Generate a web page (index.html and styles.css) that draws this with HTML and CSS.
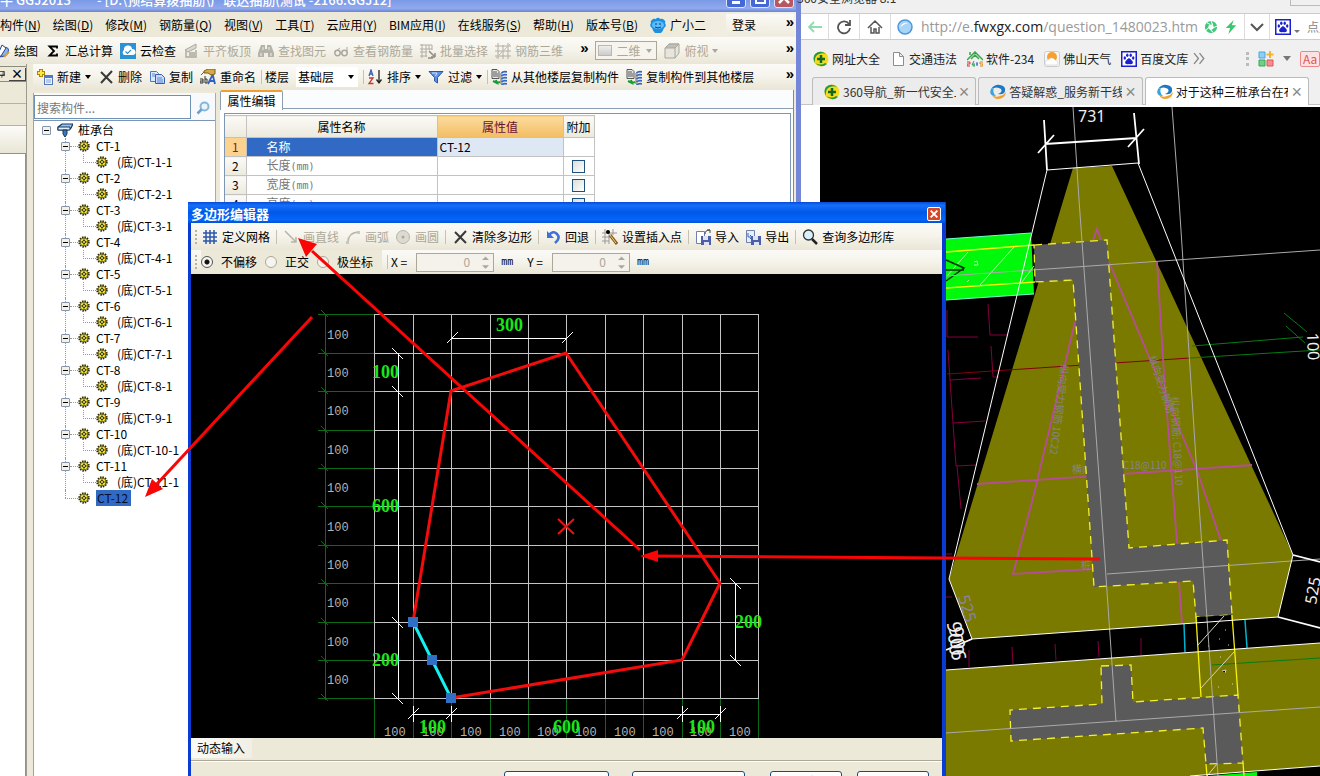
FILE: index.html
```html
<!DOCTYPE html>
<html lang="zh-CN">
<head>
<meta charset="utf-8">
<title>多边形编辑器</title>
<link rel="stylesheet" href="styles.css">
</head>
<body>
<svg class="defs" aria-hidden="true">
  <defs>
    <symbol id="i-pen" viewBox="0 0 16 16"><ellipse cx="9" cy="9" rx="6" ry="4" fill="#8fb4ee" stroke="#2b4fa8" transform="rotate(-35 9 9)"/><path d="M8 2l4 3-5 8-3 1 0-3z" fill="#fff" stroke="#24408c"/><path d="M10 14l5-5" stroke="#d8a030" stroke-width="2"/></symbol>
    <symbol id="i-sigma" viewBox="0 0 16 16"><path d="M12 5.500V3.500H4.500L9 8L4.500 12.500H12V10.500" fill="none" stroke="#000" stroke-width="1.800"/></symbol>
    <symbol id="i-cloud" viewBox="0 0 16 16"><rect width="16" height="16" fill="#2a93d5"/><path d="M4 12a3 3 0 0 1 0-5 4 4 0 0 1 8-1 3 3 0 0 1 1 6z" fill="#fff"/><path d="M5.500 8.500l2 2 3.500-3.500" fill="none" stroke="#2a93d5" stroke-width="1.200"/></symbol>
    <symbol id="i-slab" viewBox="0 0 16 16"><path d="M2 7l11-6v4l-8 4z" fill="#dcdad0" stroke="#aaa89e"/><path d="M3 8v6h10V7M6 10h6M6 12h6" fill="none" stroke="#aaa89e" stroke-width="1.400"/></symbol>
    <symbol id="i-binoc" viewBox="0 0 16 16"><path d="M3 2h4v4h2V2h4l3 8v4h-6v-4H6v4H0v-4z" fill="#b5b3a9"/><path d="M3 10v3M13 10v3M5 4v3M11 4v3" stroke="#eee"/></symbol>
    <symbol id="i-glasses" viewBox="0 0 16 16"><circle cx="4.500" cy="10" r="2.700" fill="none" stroke="#aaa89e" stroke-width="1.500"/><circle cx="11.500" cy="10" r="2.700" fill="none" stroke="#aaa89e" stroke-width="1.500"/><path d="M7 10h2M3 8l4-3M14 9V4" stroke="#aaa89e"/></symbol>
    <symbol id="i-batch" viewBox="0 0 16 16"><path d="M0 2h12M0 6h12M0 9h7M0 13h7M2 1v14M6 2v12M9 2v5M12 2v5" stroke="#b0aea4"/><path d="M9 8l5 5M15 14v-4M15 14h-4M8 15h5" stroke="#8f8d85" stroke-width="1.500"/></symbol>
    <symbol id="i-bars" viewBox="0 0 16 16"><path d="M0 3h16M0 8h16M0 13h16M3 0v16M8 2v14M13 0v16" stroke="#b0aea4"/><path d="M1 15L15 1" stroke="#c0beb5"/></symbol>
    <symbol id="i-cube" viewBox="0 0 16 16"><path d="M1 5l4-4h10v9l-4 5H1z" fill="#e7e5dc" stroke="#a8a69c"/><path d="M1 5l4-4h10l-4 4z" fill="#c2c0b6" stroke="#a8a69c"/><path d="M11 5v10" stroke="#a8a69c"/></symbol>
    <symbol id="i-new" viewBox="0 0 16 16"><path d="M4 0v8M0 4h8" stroke="#a98a00" stroke-width="4"/><path d="M4 1v6M1 4h6" stroke="#ffe34a" stroke-width="2"/><rect x="7.500" y="6.500" width="8" height="9" fill="#e9f2ff" stroke="#5577b8"/><path d="M8 8h7" stroke="#4d7bd0" stroke-width="2"/><path d="M9 11h5M9 13h5" stroke="#7fa2dd"/></symbol>
    <symbol id="i-x" viewBox="0 0 16 16"><path d="M3 3l11 11M14 2L3 14" stroke="#3a3a3a" stroke-width="2"/></symbol>
    <symbol id="i-copy" viewBox="0 0 16 16"><path d="M1.500 2.500h6l2 2v8h-8z" fill="#dce9ff" stroke="#4d78c4"/><path d="M6.500 5.500h6l3 3v6h-9z" fill="#c8dcff" stroke="#345fb0"/><path d="M8 9h5M8 11h6M8 13h6M3 5h3M3 7h3" stroke="#5c86d2"/></symbol>
    <symbol id="i-rename" viewBox="0 0 16 16"><path d="M4 2l4-2h7v5l-4 1-3-2H4z" fill="#d5a945" stroke="#7b5c1c"/><path d="M1 6l3-3" stroke="#7b5c1c"/><path d="M8 15l4-8h1l2 8M10 12h5" fill="none" stroke="#2f61c4" stroke-width="1.800"/><path d="M0 10h3v4H0v-2h3M5 7v7h2v-4H5" fill="none" stroke="#333"/></symbol>
    <symbol id="i-sort" viewBox="0 0 16 16"><path d="M2 7l2-6 2 6M2.500 5h3" fill="none" stroke="#3b62b8" stroke-width="1.300"/><path d="M2 9h4L2 14.500h4.500" fill="none" stroke="#c03a3a" stroke-width="1.300"/><path d="M12 1v12M9.500 10.500L12 14l2.500-3.500" fill="none" stroke="#222" stroke-width="1.300"/></symbol>
    <symbol id="i-funnel" viewBox="0 0 16 16"><path d="M1 2.500h14L9.500 8.500V14l-3-2V8.500z" fill="#5d8fe6" stroke="#2c55a5"/><path d="M4 4h5L7.500 7" fill="none" stroke="#cfe2ff"/></symbol>
    <symbol id="i-floor" viewBox="0 0 16 16"><path d="M1 .5h5l2 2v7H1z" fill="#e9e9e9" stroke="#555"/><path d="M2 3h4M2 5h5M2 7h5" stroke="#555"/><path d="M2 12l4 2-1-3M6 14l3-1" stroke="#1b9b34" stroke-width="2" fill="none"/><path d="M10.500 4q2-2 5.500-1M10.500 7q2-2 5.500-1M10.500 10q2-2 5.500-1M10.500 13q2-2 5.500-1M10.500 16q2-2 5.500-1" stroke="#3566c0" stroke-width="1.800" fill="none"/><path d="M10 4v11" stroke="#666"/></symbol>
    <symbol id="i-mascot" viewBox="0 0 16 16"><path d="M8 1q1-1 2 1 3-1 4 1 2 1 1 3 2 3-1 5-1 3-3 5H5q-2-2-3-5-3-2-1-5-1-2 1-3 1-2 4-1 1-2 2-1z" fill="#1d8fe0"/><ellipse cx="8" cy="8" rx="6" ry="4" fill="#5bbcfb"/><path d="M6 6v2M10 6v2M5 10q3 2 6 0" stroke="#0b3c78" fill="none"/></symbol>
    <symbol id="i-gear" viewBox="0 0 12 12"><circle cx="6" cy="6" r="4.800" fill="none" stroke="#2d2a00" stroke-width="1.800" stroke-dasharray="1.500 1"/><circle cx="6" cy="6" r="4" fill="#f1e63a" stroke="#2d2a00" stroke-width=".6"/><path d="M6 2v8M2 6h8" stroke="#2d2a00" stroke-width=".7"/><circle cx="6" cy="6" r="1.500" fill="#fff79a" stroke="#2d2a00"/></symbol>
    <symbol id="i-cap" viewBox="0 0 16 16"><path d="M1 5l4-3h11l-2 4-3 2H1z" fill="#9cc4ea" stroke="#12365f" stroke-width="1.200"/><path d="M1 5h12v3H1z" fill="#e4f1fc" stroke="#12365f"/><path d="M6 8h4v4l-2 3-2-3z" fill="#3f78b5" stroke="#12365f"/></symbol>
    <symbol id="i-find" viewBox="0 0 16 16"><circle cx="9.500" cy="6.500" r="4" fill="#e8f5ff" stroke="#86b6dc" stroke-width="2"/><path d="M6.500 9.500L2.500 13.500" stroke="#6aa0cf" stroke-width="2.500"/></symbol>
    <symbol id="i-grid" viewBox="0 0 16 16"><path d="M1 4h14M1 8h14M1 12h14M4 1v14M8 1v14M12 1v14" stroke="#2b57ad" stroke-width="1.500"/></symbol>
    <symbol id="i-line" viewBox="0 0 16 16"><path d="M2 2l11 11M13 8v5H8" fill="none" stroke="#b7b5aa" stroke-width="1.500"/></symbol>
    <symbol id="i-arc" viewBox="0 0 16 16"><path d="M3 13Q3 4 13 3" fill="none" stroke="#b7b5aa" stroke-width="1.500"/><path d="M1 12h3v3H1zM12 2h3v3h-3z" fill="#c9c7bc"/></symbol>
    <symbol id="i-circ" viewBox="0 0 16 16"><circle cx="8" cy="8" r="6.500" fill="#dddbd1" stroke="#b7b5aa"/><circle cx="8" cy="8" r="1.500" fill="#aaa89e"/></symbol>
    <symbol id="i-undo" viewBox="0 0 16 16"><path d="M4 6q4-5 8-1t-2 9" fill="none" stroke="#3f72d4" stroke-width="2.600"/><path d="M2 2v7h7z" fill="#3f72d4"/></symbol>
    <symbol id="i-insert" viewBox="0 0 16 16"><path d="M0 4h15M0 8h9M0 12h7M3 0v15M7 4v11M11 0v6" stroke="#999"/><circle cx="6" cy="3" r="2" fill="#000"/><path d="M8 6l7 9" stroke="#8a5a1a" stroke-width="3"/><path d="M8 6l6 8" stroke="#f0d080"/></symbol>
    <symbol id="i-import" viewBox="0 0 16 16"><path d="M1.500 2.500h8v12h-8z" fill="#fff" stroke="#6f7fb0"/><rect x="6" y="7" width="10" height="9" fill="#4d5fa8"/><path d="M8 7h5v4H8zM9 13h5v3H9z" fill="#dfe4f5"/><path d="M10 5q0-4 5-4M12 1h3v3" fill="none" stroke="#444"/></symbol>
    <symbol id="i-export" viewBox="0 0 16 16"><path d="M1.500 1.500h8v12h-8z" fill="#e7eefc" stroke="#6f7fb0"/><rect x="6" y="7" width="10" height="9" fill="#4d5fa8"/><path d="M8 7h5v4H8zM9 13h5v3H9z" fill="#dfe4f5"/><path d="M3 4v4h4M5 6l2 2-2 2" fill="none" stroke="#3b66c0"/></symbol>
    <symbol id="i-mag" viewBox="0 0 16 16"><circle cx="6.500" cy="6" r="5" fill="#d8f0fb" stroke="#333" stroke-width="1.300"/><path d="M10 10l5 5" stroke="#222" stroke-width="2.500"/></symbol>
    <symbol id="i-360" viewBox="0 0 16 16"><circle cx="8" cy="8" r="7.500" fill="#f2dc1d"/><path d="M2 3Q8-2 14 4Q11 1 6 3T2 12Q-1 7 2 3z" fill="#239b3c"/><path d="M14 13Q8 18 2 12Q8 15 12 12z" fill="#239b3c"/><path d="M8 4v8M4 8h8" stroke="#13661f" stroke-width="2.500"/></symbol>
    <symbol id="i-page" viewBox="0 0 16 16"><path d="M3.500 1.500h6l4 4v9h-10z M9.500 1.500v4h4" fill="#fff" stroke="#8d8d8d"/></symbol>
    <symbol id="i-house" viewBox="0 0 16 16"><path d="M0 9l8-8 8 8M4 8l4-4 4 4M3 4V1" fill="none" stroke="#3aa34b" stroke-width="1.500"/><path d="M0 11h3v2H0v2h3" fill="none" stroke="#d33"/><path d="M7 10l-2 4h3M7 12v4" fill="none" stroke="#2aa050"/><path d="M10 11v4M9 13h2" stroke="#2a66d0"/><path d="M16 11h-3v2h3v2h-3" fill="none" stroke="#e08a1c"/></symbol>
    <symbol id="i-sun" viewBox="0 0 16 16"><rect x=".5" y=".5" width="15" height="15" rx="2" fill="#f6f6f6" stroke="#ccc"/><circle cx="8" cy="6" r="5" fill="#f5a031"/><path d="M2 14a3 3 0 0 1 2-5 4 4 0 0 1 7 0 3 3 0 0 1 2 5z" fill="#fff" stroke="#ccc" stroke-width=".6"/></symbol>
    <symbol id="i-paw" viewBox="0 0 16 16"><rect x=".75" y=".75" width="14.500" height="14.500" fill="#fff" stroke="#1a20cf" stroke-width="1.500"/><path d="M8 7q2 1 4 4 0 3-4 2-4 1-4-2 2-3 4-4z" fill="#1a20cf"/><ellipse cx="3.800" cy="7" rx="1.200" ry="1.700" fill="#1a20cf"/><ellipse cx="6.300" cy="4.200" rx="1.200" ry="1.800" fill="#1a20cf"/><ellipse cx="9.700" cy="4.200" rx="1.200" ry="1.800" fill="#1a20cf"/><ellipse cx="12.200" cy="7" rx="1.200" ry="1.700" fill="#1a20cf"/></symbol>
    <symbol id="i-swirl" viewBox="0 0 16 16"><path d="M1 5Q5 0 10 1Q16 2 15 7Q14 11 8 10Q13 8 11 5Q7 2 1 5z" fill="#1f78c4"/><path d="M2 11Q6 14 10 12Q14 11 16 8Q15 15 8 15Q4 15 2 11z" fill="#f0a030"/><path d="M1 5Q-2 12 6 12Q2 9 4 4z" fill="#39a3e0"/></symbol>
    <symbol id="i-apps" viewBox="0 0 16 16"><path d="M1 1h6v6H1z" fill="#8ed0f4" stroke="#4aa6dc"/><path d="M1 9h6v6H1z" fill="#6fd088" stroke="#37a955"/><path d="M9 9h6v6H9z" fill="#f58f8f" stroke="#dd5454"/><path d="M12 0v7M8.500 3.500h7" stroke="#f2b52b" stroke-width="2"/></symbol>
  </defs>
</svg>

<div class="desktop">
  <main class="app">
    <header class="app-title"><span>牛 GGJ2013</span><span class="path">- [D:\预结算拨抽筋\广联达抽筋(测试 -2166.GGJ12]</span>
      <span class="win-btns"><button aria-label="最小化"><i class="mini"></i></button><button aria-label="最大化"><i class="maxi"></i></button><button class="red" aria-label="关闭"><svg viewBox="0 0 12 12"><path d="M1 1l10 10M11 1L1 11" stroke="#fff" stroke-width="2.500"/></svg></button></span></header>
    <nav class="menubar">
      <button>构件(<u>N</u>)</button><button>绘图(<u>D</u>)</button><button>修改(<u>M</u>)</button><button>钢筋量(<u>Q</u>)</button><button>视图(<u>V</u>)</button><button>工具(<u>T</u>)</button><button>云应用(<u>Y</u>)</button><button>BIM应用(<u>I</u>)</button><button>在线服务(<u>S</u>)</button><button>帮助(<u>H</u>)</button><button>版本号(<u>B</u>)</button><button class="tool"><svg><use href="#i-mascot"/></svg>广小二</button>
      <div class="login"><button>登录</button><span class="more">»</span></div>
    </nav>
    <div class="toolbar top">
      <button class="tool"><svg><use href="#i-pen"/></svg>绘图</button>
      <button class="tool"><svg><use href="#i-sigma"/></svg>汇总计算</button>
      <button class="tool"><svg><use href="#i-cloud"/></svg>云检查</button>
      <button class="tool" disabled><svg><use href="#i-slab"/></svg>平齐板顶</button>
      <button class="tool" disabled><svg><use href="#i-binoc"/></svg>查找图元</button>
      <button class="tool" disabled><svg><use href="#i-glasses"/></svg>查看钢筋量</button>
      <button class="tool" disabled><svg><use href="#i-batch"/></svg>批量选择</button>
      <button class="tool" disabled><svg><use href="#i-bars"/></svg>钢筋三维</button>
      <span class="more gap">»</span>
      <span class="combo grey"><i class="swatch"></i><select aria-label="视图模式" disabled><option>二维</option></select></span>
      <button class="tool drop" disabled><svg><use href="#i-cube"/></svg>俯视</button>
      <span class="more end">»</span>
    </div>
    <div class="work">
      <aside class="dock">
        <div class="dock-head"><svg class="pin" viewBox="0 0 8 12"><path d="M0 2h7v6H0M5 2v6M0 8h8M3 8v4" fill="none" stroke="#000"/></svg><button aria-label="关闭面板">×</button></div>
        <div class="dock-row"></div><div class="dock-row"></div><div class="dock-row light"></div><div class="dock-body"></div>
      </aside>
      <section class="content">
        <div class="toolbar sub">
          <button class="tool drop"><svg><use href="#i-new"/></svg>新建</button>
          <button class="tool"><svg><use href="#i-x"/></svg>删除</button>
          <button class="tool"><svg><use href="#i-copy"/></svg>复制</button>
          <button class="tool"><svg><use href="#i-rename"/></svg>重命名</button>
          <i class="sep"></i>
          <label for="floor">楼层</label>
          <span class="combo"><select id="floor"><option>基础层</option></select></span>
          <i class="sep"></i>
          <button class="tool drop"><svg><use href="#i-sort"/></svg>排序</button>
          <button class="tool drop"><svg><use href="#i-funnel"/></svg>过滤</button>
          <i class="sep"></i>
          <button class="tool"><svg><use href="#i-floor"/></svg>从其他楼层复制构件</button>
          <button class="tool"><svg><use href="#i-floor"/></svg>复制构件到其他楼层</button>
          <span class="more end">»</span>
        </div>
        <div class="panes">
          <section class="tree-pane">
            <div class="search"><input type="text" placeholder="搜索构件..." aria-label="搜索构件"><button aria-label="搜索"><svg><use href="#i-find"/></svg></button></div>
            <div class="tree">
              <div class="row root"><i class="exp"></i><svg class="cap"><use href="#i-cap"/></svg><span class="name">桩承台</span></div>
              <ul>
                <li><div class="row"><i class="exp"></i><i class="dash"></i><svg><use href="#i-gear"/></svg><span>CT-1</span></div><div class="row leaf"><i class="elbow"></i><svg><use href="#i-gear"/></svg><span>(底)CT-1-1</span></div></li>
                <li><div class="row"><i class="exp"></i><i class="dash"></i><svg><use href="#i-gear"/></svg><span>CT-2</span></div><div class="row leaf"><i class="elbow"></i><svg><use href="#i-gear"/></svg><span>(底)CT-2-1</span></div></li>
                <li><div class="row"><i class="exp"></i><i class="dash"></i><svg><use href="#i-gear"/></svg><span>CT-3</span></div><div class="row leaf"><i class="elbow"></i><svg><use href="#i-gear"/></svg><span>(底)CT-3-1</span></div></li>
                <li><div class="row"><i class="exp"></i><i class="dash"></i><svg><use href="#i-gear"/></svg><span>CT-4</span></div><div class="row leaf"><i class="elbow"></i><svg><use href="#i-gear"/></svg><span>(底)CT-4-1</span></div></li>
                <li><div class="row"><i class="exp"></i><i class="dash"></i><svg><use href="#i-gear"/></svg><span>CT-5</span></div><div class="row leaf"><i class="elbow"></i><svg><use href="#i-gear"/></svg><span>(底)CT-5-1</span></div></li>
                <li><div class="row"><i class="exp"></i><i class="dash"></i><svg><use href="#i-gear"/></svg><span>CT-6</span></div><div class="row leaf"><i class="elbow"></i><svg><use href="#i-gear"/></svg><span>(底)CT-6-1</span></div></li>
                <li><div class="row"><i class="exp"></i><i class="dash"></i><svg><use href="#i-gear"/></svg><span>CT-7</span></div><div class="row leaf"><i class="elbow"></i><svg><use href="#i-gear"/></svg><span>(底)CT-7-1</span></div></li>
                <li><div class="row"><i class="exp"></i><i class="dash"></i><svg><use href="#i-gear"/></svg><span>CT-8</span></div><div class="row leaf"><i class="elbow"></i><svg><use href="#i-gear"/></svg><span>(底)CT-8-1</span></div></li>
                <li><div class="row"><i class="exp"></i><i class="dash"></i><svg><use href="#i-gear"/></svg><span>CT-9</span></div><div class="row leaf"><i class="elbow"></i><svg><use href="#i-gear"/></svg><span>(底)CT-9-1</span></div></li>
                <li><div class="row"><i class="exp"></i><i class="dash"></i><svg><use href="#i-gear"/></svg><span>CT-10</span></div><div class="row leaf"><i class="elbow"></i><svg><use href="#i-gear"/></svg><span>(底)CT-10-1</span></div></li>
                <li><div class="row"><i class="exp"></i><i class="dash"></i><svg><use href="#i-gear"/></svg><span>CT-11</span></div><div class="row leaf"><i class="elbow"></i><svg><use href="#i-gear"/></svg><span>(底)CT-11-1</span></div></li>
                <li class="last"><div class="row"><i class="dash long"></i><svg><use href="#i-gear"/></svg><span class="selected">CT-12</span></div></li>
              </ul>
            </div>
          </section>
          <section class="prop-pane">
            <div class="tabs"><button class="tab">属性编辑</button></div>
            <div class="grid-box">
              <table class="props">
                <colgroup><col class="c-num"><col class="c-name"><col class="c-val"><col class="c-add"></colgroup>
                <thead><tr><th></th><th>属性名称</th><th class="hot">属性值</th><th>附加</th></tr></thead>
                <tbody>
                  <tr class="sel"><th>1</th><td>名称</td><td>CT-12</td><td></td></tr>
                  <tr><th>2</th><td>长度<span class="mm">(mm)</span></td><td></td><td class="c"><input type="checkbox" aria-label="长度附加"></td></tr>
                  <tr><th>3</th><td>宽度<span class="mm">(mm)</span></td><td></td><td class="c"><input type="checkbox" aria-label="宽度附加"></td></tr>
                  <tr><th>4</th><td>高度<span class="mm">(mm)</span></td><td></td><td class="c"><input type="checkbox" aria-label="高度附加"></td></tr>
                </tbody>
              </table>
            </div>
          </section>
        </div>
      </section>
    </div>
  </main>

  <section class="browser">
    <header class="b-title"><span>360安全浏览器 8.1</span><i class="b-ctl"></i></header>
    <div class="address">
      <button aria-label="后退"><svg viewBox="0 0 16 16"><path d="M15 8H2M7 3L2 8l5 5" fill="none" stroke="#8fdcae" stroke-width="1.800"/></svg></button>
      <button aria-label="刷新"><svg viewBox="0 0 16 16"><path d="M13 5A6 6 0 1 0 14 9M14 1v5H9" fill="none" stroke="#555" stroke-width="1.800"/></svg></button>
      <button aria-label="主页"><svg viewBox="0 0 16 16"><path d="M1 9l7-7 7 7M4 8v6h3v-4h2v4h3V8" fill="none" stroke="#555" stroke-width="1.500"/></svg></button>
      <svg class="globe" viewBox="0 0 16 16"><circle cx="8" cy="8" r="7" fill="#a8d4f7" stroke="#4e96df" stroke-width="1.500"/><path d="M3 9Q5 3 11 4Q6 5 3 9z" fill="#fff"/></svg>
      <div class="url">http://e.<b>fwxgx.com</b>/question_1480023.htm</div>
      <svg class="ico" viewBox="0 0 16 16"><circle cx="8" cy="8" r="5" fill="none" stroke="#3fc878" stroke-width="4"/><path d="M8 1l2 5M15 7l-5 2M10 14l-3-4M2 12l4-4M3 3l4 2" stroke="#fff" stroke-width="1.200"/></svg>
      <svg class="ico" viewBox="0 0 16 16"><path d="M11 0L2 9h5l-2 7 9-10H9z" fill="#36c86c"/></svg>
      <button class="b-left" aria-label="展开"><svg viewBox="0 0 16 16"><path d="M2 5l6 6 6-6" fill="none" stroke="#555" stroke-width="2"/></svg></button>
      <div class="searchbox"><svg><use href="#i-paw"/></svg><i class="tri"></i><span>点此搜索</span></div>
    </div>
    <nav class="bookmarks">
      <a href="#"><svg><use href="#i-360"/></svg>网址大全</a><a href="#"><svg><use href="#i-page"/></svg>交通违法</a><a href="#"><svg><use href="#i-house"/></svg>软件-234</a><a href="#"><svg><use href="#i-sun"/></svg>佛山天气</a><a href="#"><svg><use href="#i-paw"/></svg>百度文库</a>
      <svg class="chev" viewBox="0 0 12 12"><path d="M1 1l4 5-4 5M6 1l4 5-4 5" fill="none" stroke="#888" stroke-width="1.200"/></svg>
      <span class="b-tools"><i class="dots"></i><svg><use href="#i-apps"/></svg><i class="tri"></i><span class="aa">Aa</span></span>
    </nav>
    <div class="b-tabs">
      <div class="b-tab"><svg><use href="#i-360"/></svg><span>360导航_新一代安全上网</span><button aria-label="关闭标签">×</button></div>
      <div class="b-tab"><svg><use href="#i-swirl"/></svg><span>答疑解惑_服务新干线</span><button aria-label="关闭标签">×</button></div>
      <div class="b-tab active"><svg><use href="#i-swirl"/></svg><span>对于这种三桩承台在布置</span><button aria-label="关闭标签">×</button></div>
    </div>
    <div class="page">
      <svg class="cad" viewBox="820 107 500 669" preserveAspectRatio="xMinYMin slice">
        <rect x="820" y="107" width="500" height="669" fill="#000"/>
        <path d="M1073 168L1112 166L1293 555L1278 617L972 639L949 579z M946 670L1320 643V766L1190 776H946z" fill="#7b7a00"/>
        <g fill="none" stroke="#85003f"><path d="M947 310v27h31M988 304l2 31h17M948 350l2 30 31-2M991 346l2 31h6M950 380l3 43 32-2M953 423l3 43 20-1M957 466l4 43M946 554h6M946 597h6M1012 647l1 17M1055 644l1 16M1098 641l1 16M1141 638v17M969 650v17"/></g>
        <path d="M947 374L1190 358" stroke="#850010"/>
        <path d="M1192 346L1303 337M1190 358L1320 350M1284 313L1307 332M1286 326L1305 343M1212 665L1320 658" stroke="#087a14"/>
        <path d="M946 239L1031 233L1034 294L946 300z M1207 776L1257 772V776z" fill="#00f80a"/>
        <path d="M946 239L1031 233M1034 294L946 300" stroke="#6dffd0"/>
        <path d="M980 285L1014 247M947 276L968 252M1022 282L1034 266M974 262l3-1 1 4-4 0M967 282l2-2" stroke="#a8ff9a" fill="none"/>
        <path d="M946 260L964 268L946 281M946 270H964" stroke="#012b04" stroke-width="1.500" fill="none"/>
        <g fill="none" stroke="#b54d98" stroke-width="1.800"><path d="M1093 240L1097 229L1101 240M1109 262L1164 392L1198 473L1221 541M1157 262L1164 373L1170 453L1177 543M1179 582L1182 623M1075 322L1035 490L1013 574L1092 569M977 484L1252 465"/></g>
        <g fill="#858585" font-size="10" font-family="Noto Sans CJK SC, sans-serif">
          <text x="1072" y="473">横向:</text><text x="1123" y="469">C18@110</text><text x="1081" y="569">桩</text>
          <text transform="translate(1061 364) rotate(97)">纵向受力钢筋 10C22</text>
          <text transform="translate(1149 357) rotate(72)">纵向受力钢筋</text>
          <text transform="translate(1171 397) rotate(87)">纵向钢筋: C18@110</text>
        </g>
        <g fill="#5a5a5a" stroke="#f4f02c" stroke-width="1.300" stroke-dasharray="8 6">
          <path d="M1034 245L1107 240L1129 548L1227 540L1232 615L1196 617L1193 581L1094 587L1073 280L1035 282z"/>
          <path d="M1101 666L1131 665L1133 702L1238 695L1243 763L1206 764L1203 728L1011 741L1010 710L1102 704z"/>
        </g>
        <path d="M1197 617L1231 615L1234 649L1199 652z" fill="#000"/>
        <path d="M1196 617L1201 697M1232 615L1238 695M1243 763L1244 776M1206 764L1207 776M946 252L1034 245M946 288L1035 282" stroke="#f7f20a" stroke-width="1.300"/>
        <path d="M1184 624L1185 652M1245 620L1247 648" stroke="#00b4cf" stroke-width="1.500"/>
        <path d="M1224 616L1198 645M1234 652L1201 688M1217 764L1207 776M1225 630h1M1228 645h1M1208 646h1M1219 639h1M1222 671l4-1-1 3M1218 687h1M1232 684h1M1220 657h1" stroke="#d8d4c0"/>
        <path d="M1073 107L1079 200L1100 490L1116 722M1172 107L1179 200L1198 490L1218 776M946 276L1320 250M1107 574L1320 559M946 733L1320 707" stroke="#aaa" fill="none"/>
        <g stroke="#fff" fill="none"><path d="M1047 170L949 579L972 639L1278 617L1293 555L1138 163zM946 670L1320 643M1190 776L1320 766"/><path stroke-width="1.800" d="M1044 120L1047 170M1134 113L1139 164M1045 144L1137 138M1038 153L1054 135M1128 147L1144 129M1293 555L1320 562M1278 617L1320 628M972 639L946 650"/></g>
        <g fill="#eee" font-family="Noto Sans, sans-serif" font-size="16"><text x="1078" y="122">731</text><text transform="translate(1307 333) rotate(88)">100</text><text transform="translate(1316 605) rotate(-80)">525</text><text transform="translate(958 597) rotate(73)" fill="#8b83a0">525</text><text transform="translate(947 622) rotate(85)" font-size="20">900</text><text transform="translate(949 627) rotate(85)" font-size="20">906</text></g>
      </svg>
    </div>
  </section>

  <section class="dialog" role="dialog" aria-label="多边形编辑器">
    <header class="d-title"><h1>多边形编辑器</h1><button aria-label="关闭"><svg viewBox="0 0 12 12"><path d="M2 2l8 8M10 2l-8 8" stroke="#fff" stroke-width="2.200"/></svg></button></header>
    <div class="toolbar d-tools">
      <i class="grip"></i>
      <button class="tool"><svg><use href="#i-grid"/></svg>定义网格</button><i class="sep"></i>
      <button class="tool" disabled><svg><use href="#i-line"/></svg>画直线</button><button class="tool" disabled><svg><use href="#i-arc"/></svg>画弧</button><button class="tool" disabled><svg><use href="#i-circ"/></svg>画圆</button><i class="sep"></i>
      <button class="tool"><svg><use href="#i-x"/></svg>清除多边形</button><i class="sep"></i>
      <button class="tool"><svg><use href="#i-undo"/></svg>回退</button><i class="sep"></i>
      <button class="tool"><svg><use href="#i-insert"/></svg>设置插入点</button><i class="sep"></i>
      <button class="tool"><svg><use href="#i-import"/></svg>导入</button><button class="tool"><svg><use href="#i-export"/></svg>导出</button><i class="sep"></i>
      <button class="tool"><svg><use href="#i-mag"/></svg>查询多边形库</button>
    </div>
    <div class="toolbar d-opts">
      <i class="grip"></i>
      <div class="radios"><label><input type="radio" name="offset" checked>不偏移</label><label><input type="radio" name="offset" disabled>正交</label><label><input type="radio" name="offset" disabled>极坐标</label></div>
      <i class="sep"></i>
      <label for="dx">X =</label><span class="spin"><input id="dx" type="text" value="0" disabled><svg viewBox="0 0 8 14"><path d="M0 4l4-4 4 4zM0 10l4 4 4-4z" fill="#aaa89c"/></svg></span><span class="mm unit">mm</span>
      <label for="dy">Y =</label><span class="spin"><input id="dy" type="text" value="0" disabled><svg viewBox="0 0 8 14"><path d="M0 4l4-4 4 4zM0 10l4 4 4-4z" fill="#aaa89c"/></svg></span><span class="mm unit">mm</span>
    </div>
    <svg class="canvas" viewBox="191 274 751 464" preserveAspectRatio="xMinYMin slice">
      <rect x="191" y="274" width="751" height="464" fill="#000"/>
      <g stroke="#0b6a14" shape-rendering="crispEdges" fill="none"><path d="M325.500 314V700M318 314.500H374M318 353.500H374M318 391.500H374M318 430.500H374M318 468.500H374M318 506.500H374M318 545.500H374M318 583.500H374M318 622.500H374M318 660.500H374M318 698.500H374"/><path d="M374.500 698V738M413.500 698V738M451.500 698V738M490.500 698V738M528.500 698V738M566.500 698V738M605.500 698V738M643.500 698V738M682.500 698V738M720.500 698V738M758.500 698V738"/></g>
      <path d="M321 310l7 7M321 349l7 7M321 387l7 7M321 426l7 7M321 464l7 7M321 502l7 7M321 541l7 7M321 579l7 7M321 618l7 7M321 656l7 7M321 694l7 7" stroke="#0b6a14"/>
      <path d="M374.500 314V698M413.500 314V698M451.500 314V698M490.500 314V698M528.500 314V698M566.500 314V698M605.500 314V698M643.500 314V698M682.500 314V698M720.500 314V698M758.500 314V698M374 314.500H759M374 353.500H759M374 391.500H759M374 430.500H759M374 468.500H759M374 506.500H759M374 545.500H759M374 583.500H759M374 622.500H759M374 660.500H759M374 698.500H759" stroke="#c4c4c4" shape-rendering="crispEdges"/>
      <g class="small"><text x="327" y="339">100</text><text x="327" y="377">100</text><text x="327" y="415">100</text><text x="327" y="454">100</text><text x="327" y="492">100</text><text x="327" y="531">100</text><text x="327" y="569">100</text><text x="327" y="607">100</text><text x="327" y="646">100</text><text x="327" y="684">100</text>
      <text x="384" y="736">100</text><text x="422" y="736">100</text><text x="460" y="736">100</text><text x="499" y="736">100</text><text x="537" y="736">100</text><text x="575" y="736">100</text><text x="614" y="736">100</text><text x="652" y="736">100</text><text x="690" y="736">100</text><text x="729" y="736">100</text></g>
      <path d="M452 338.500H567M398.500 353V698M735.500 583V660M413 714.500H720M413.500 706V722M451.500 706V722M682.500 706V722M720.500 706V722" stroke="#fff" shape-rendering="crispEdges"/>
      <path d="M447 343l11-11M562 343l11-11M392 348l11 11M392 386l11 11M392 617l11 11M392 693l11 11M730 578l11 11M730 655l11 11M408 719l11-11M446 719l11-11M677 719l11-11M715 719l11-11" stroke="#fff"/>
      <path d="M413 622L451 391L566 353L720 583L682 660L451 698" fill="none" stroke="#f20c0c" stroke-width="3"/>
      <path d="M558 519l16 15M558 534l16-15" stroke="#f01010" stroke-width="2"/>
      <path d="M413 622L451 698" stroke="#14f0f4" stroke-width="3"/>
      <path d="M408 617h10v10h-10zM427 655h10v10h-10zM446 693h10v10h-10z" fill="#2f6fc4"/>
      <g class="big"><text x="496" y="331">300</text><text x="372" y="378">100</text><text x="372" y="512">600</text><text x="372" y="666">200</text><text x="735" y="628">200</text><text x="419" y="733">100</text><text x="553" y="733">600</text><text x="688" y="733">100</text></g>
    </svg>
    <div class="status"><span>动态输入</span></div>
    <footer class="d-foot"><button class="w105">从CAD选择截面图</button><button class="w113">在CAD中绘制截面图</button><button>确定</button><button>取消</button></footer>
  </section>

  <svg class="arrows" aria-hidden="true">
    <path d="M312 317L156 485M640 550L312 251M1100 559L654 556" stroke="#fa0505" stroke-width="3"/>
    <path d="M145 497L152 479L163 489zM298 238L317 244L306 257zM640 556L658 550V562z" fill="#fa0505"/>
  </svg>
</div>
</body>
</html>
```
FILE: styles.css
```css
* { box-sizing: border-box; }
html, body { height: 100%; }
body {
  margin: 0;
  overflow: hidden;
  font: 12px/16px "Noto Sans CJK SC", sans-serif;
  color: #000;
}
button, input, select { font: inherit; color: inherit; margin: 0; }
button { padding: 0; border: 0; background: none; white-space: nowrap; }
ul { list-style: none; margin: 0; padding: 0; }
svg { flex: none; display: block; }
.defs { position: absolute; width: 0; height: 0; }
.mm { font-family: "DejaVu Sans Mono", monospace; font-size: 10px; }

.desktop { position: relative; display: flex; height: 100vh; overflow: hidden; background: #fff; }

/* main application window */
.app {
  flex: 796 1 0;
  min-width: 0;
  display: flex;
  flex-direction: column;
  background: #ece9d8;
  border-right: 5px solid #7486d8;
}
.app-title {
  display: flex;
  align-items: flex-end;
  height: 12px;
  overflow: hidden;
  padding: 0 2px 4px 0;
  background: linear-gradient(#7a9ae6, #8fa9ee 70%, #6e83cf);
  color: #fff;
  font-size: 13px;
  font-weight: 500;
  white-space: nowrap;
}
.path { margin-left: 26px; }
.win-btns { margin-left: auto; display: flex; gap: 4px; }
.win-btns button {
  display: flex;
  align-items: center;
  justify-content: center;
  width: 20px;
  height: 20px;
  border: 1px solid #dfe6fb;
  border-radius: 3px;
  background: #4668d4;
  color: #fff;
}
.win-btns svg { width: 12px; height: 12px; }
.win-btns .red { background: #b8575d; }
.mini { width: 8px; height: 3px; background: #fff; margin-top: 8px; }
.maxi { width: 11px; height: 11px; border: 2px solid #fff; }

.menubar {
  display: flex;
  align-items: center;
  gap: 12px;
  height: 25px;
  padding-right: 2px;
  background: linear-gradient(90deg, #ece9d8 80%, #f4f2e8);
  white-space: nowrap;
}
.login {
  margin-left: auto;
  display: flex;
  align-items: center;
  justify-content: space-between;
  width: 68px;
  height: 22px;
  padding-left: 6px;
  background: linear-gradient(#fbfaf6, #eeebdd);
}
.more { font: 700 15px/16px "Liberation Sans", sans-serif; margin-top: -6px; }
.more.end { margin-left: auto; }
.more.gap { margin: -6px 0 0 10px; }

.toolbar {
  display: flex;
  align-items: center;
  gap: 7px;
  background: linear-gradient(#fbfaf7, #f5f3ea 50%, #e9e6d6);
  white-space: nowrap;
}
.top { height: 27px; padding-right: 2px; }
.top .tool:first-child { margin-left: -6px; }
.sub { height: 26px; padding: 0 2px 0 4px; }
.sub .sep { margin: 0 -4px 0 -2px; }
.tool { display: flex; align-items: center; gap: 4px; }
.tool svg { width: 16px; height: 16px; }
.tool:disabled { color: #aca899; }
.drop::after { content: ""; border: 3px solid transparent; border-top: 4px solid currentColor; border-bottom: 0; }
.sep { flex: none; width: 1px; height: 14px; background: #c5c2b2; }
.combo { display: flex; align-items: center; width: 62px; height: 20px; background: #fff; }
.combo::after { content: ""; margin: 0 4px 0 auto; border: 3px solid transparent; border-top: 4px solid #000; border-bottom: 0; }
.combo select { appearance: none; flex: 1; min-width: 0; border: 0; padding: 0 0 0 2px; background: none; opacity: 1; }
.combo.grey { height: 19px; border: 1px solid #aca899; background: #f6f4ec; color: #aca899; }
.combo.grey::after { border-top-color: #aca899; }
.swatch { width: 14px; height: 11px; margin: 0 2px; border: 1px solid #bbb9ae; background: linear-gradient(#eee, #ccc); }

.work { flex: 1; display: flex; min-height: 0; }
.dock { flex: none; width: 27px; margin-right: 6px; display: flex; flex-direction: column; border-right: 1px solid #9b9a90; }
.dock-head { display: flex; align-items: center; justify-content: space-between; height: 16px; margin-top: 2px; border: 1px solid #8d8b7e; border-width: 1px 0; }
.pin { width: 5px; height: 10px; }
.dock-head button { width: 17px; height: 13px; font: 18px/10px "Liberation Sans", sans-serif; border: 1px solid #444; border-width: 0 1px 1px 0; }
.dock-row { height: 22px; border-bottom: 1px solid #b5b2a0; }
.dock-row.light { height: 28px; background: linear-gradient(#fcfbf8, #e9e6d6); border-color: #7c96b4; }
.dock-body { flex: 1; background: #fff; border-right: 1px solid #7c96b4; }

.content { flex: 1; min-width: 0; display: flex; flex-direction: column; }
.panes { flex: 1; min-height: 0; display: flex; gap: 4px; padding-right: 2px; }
.tree-pane { flex: none; width: 183px; margin-top: 3px; background: #fff; border-left: 1px solid #8fa6bd; border-right: 1px solid #aaa; }
.search { display: flex; height: 27px; background: #f7f9fc; padding-top: 2px; }
.search input { width: 157px; height: 24px; padding: 0 2px; border: 1px solid #6f91b5; background: #fff; line-height: 18px; }
.search input::placeholder { color: #777; }
.search button { padding: 0 4px; }
.search svg { width: 16px; height: 16px; }
.tree { border-top: 1px solid #7c96b4; padding-top: 1px; }
.row { display: flex; align-items: center; height: 16px; white-space: nowrap; }
.row svg { width: 12px; height: 12px; }
.row .cap { width: 16px; height: 16px; margin: 0 5px 0 6px; }
.root { padding-left: 8px; }
.exp { position: relative; z-index: 1; flex: none; width: 9px; height: 9px; border: 1px solid #8296ae; border-radius: 1px; background: linear-gradient(#000, #000) 1px 3px / 5px 1px no-repeat #f3f1ea; }
.tree li { position: relative; padding-left: 27px; }
.tree li::before { content: ""; position: absolute; left: 31px; top: 0; bottom: 0; border-left: 1px dotted #999; }
.tree li.last::before { bottom: 8px; }
.dash { width: 8px; border-top: 1px dotted #999; }
.dash.long { width: 13px; margin-left: 4px; }
.row span { margin-left: 6px; }
.row .name { margin-left: 0; }
.leaf { padding-left: 22px; }
.elbow { align-self: flex-start; width: 13px; height: 9px; border: 1px dotted #999; border-width: 0 0 1px 1px; }
.leaf span { margin-left: 9px; }
.row .selected { padding: 0 3px 0 1px; background: #316ac5; color: #06102a; }

.prop-pane { flex: 1; min-width: 0; display: flex; flex-direction: column; background: #fff; border-right: 1px solid #8a8a80; }
.tabs { flex: none; height: 19px; background: #fbfcfd; border-bottom: 1px solid #8ba0b3; }
.tab { height: 20px; width: 63px; line-height: 16px; background: #fff; border: 1px solid #8ba0b3; border-top: 2px solid #f0a030; border-bottom: 0; border-radius: 2px 2px 0 0; }
.grid-box { flex: 1; margin: 4px 2px 0 4px; border: 1px solid #7c96b4; padding: 1px 0; }
.props { table-layout: fixed; border-collapse: collapse; width: 369px; }
.c-num { width: 21px; } .c-name { width: 191px; } .c-val { width: 126px; } .c-add { width: 31px; }
.props th { font-weight: 400; background: linear-gradient(#fbfaf7, #ece9dc); }
.props th, .props td { border: 1px solid #c2c2c2; padding: 0; height: 19px; line-height: 14px; white-space: nowrap; }
.props thead th { height: 22px; }
.props tr > :first-child { border-left: 0; }
.props thead .hot { background: linear-gradient(#fbdc9e, #f3bd62); color: #6a1030; }
.props td:nth-child(2) { padding-left: 20px; color: #777; }
.props td:nth-child(3) { padding-left: 2px; }
.props td.c { text-align: center; }
.props .sel th { background: #fbd28e; color: #8b1a2a; }
.props .sel td:nth-child(2) { background: #316ac5; color: #fff; }
.props .sel td:nth-child(3) { background: #dde8f4; }
.props input { appearance: none; display: block; width: 13px; height: 13px; margin: 0 auto; border: 1px solid #1c5180; background: linear-gradient(135deg, #dcdcd7, #fff); }

/* browser window */
.browser { flex: 519 1 0; min-width: 0; display: flex; flex-direction: column; background: #f0f0f0; color: #333; }
.b-title { display: flex; justify-content: space-between; align-items: flex-end; height: 13px; padding-bottom: 7px; margin-left: -4px; }
.b-ctl { width: 30px; height: 12px; border: 1px solid #bbb; border-width: 0 0 1px 1px; }
.address { display: flex; align-items: center; height: 27px; background: #fff; border: 1px solid #ccc; border-width: 1px 0; overflow: hidden; white-space: nowrap; }
.address button { flex: none; display: flex; align-items: center; justify-content: center; width: 31px; height: 25px; border-right: 1px solid #ddd; }
.address button:first-child { width: 28px; }
.address button svg { width: 16px; height: 16px; }
.globe { width: 16px; height: 16px; margin: 0 8px 0 6px; }
.url { width: 284px; font: 14px/24px "Open Sans", "Noto Sans", sans-serif; color: #999; }
.url b { font-weight: 400; color: #222; }
.ico { width: 14px; height: 14px; margin-left: 6px; }
.address .b-left { width: 26px; margin-left: 6px; border-left: 1px solid #ddd; }
.searchbox { display: flex; align-items: center; gap: 3px; padding-left: 5px; color: #888; }
.searchbox svg { width: 16px; height: 16px; }
.searchbox span { margin-left: 4px; }
.tri { flex: none; border: 4px solid transparent; border-top: 5px solid #777; border-bottom: 0; }
.searchbox .tri { border-width: 3px 3px 0; margin-top: 10px; }
.bookmarks { display: flex; align-items: center; gap: 10px; height: 37px; padding-left: 12px; overflow: hidden; white-space: nowrap; }
.bookmarks a { display: flex; align-items: center; gap: 3px; color: #222; text-decoration: none; }
.bookmarks svg { width: 16px; height: 16px; }
.bookmarks .chev { width: 13px; height: 13px; margin-left: -5px; }
.b-tools { margin-left: auto; display: flex; align-items: center; gap: 9px; }
.dots { width: 3px; height: 14px; border-left: 3px dotted #bbb; }
.aa { width: 20px; height: 16px; border: 1px solid #e88; border-radius: 2px; color: #d55; line-height: 14px; padding-left: 2px; background: #fbe3e3; }
.b-tabs { display: flex; gap: 2px; height: 28px; padding: 0 11px; border-bottom: 1px solid #c4c4c4; }
.b-tab { flex: 1; min-width: 0; display: flex; align-items: center; gap: 3px; height: 28px; padding: 0 6px 0 11px; border: 1px solid #bbb; border-bottom: 0; border-radius: 3px 3px 0 0; background: #ececec; }
.b-tab span { flex: 1; overflow: hidden; white-space: nowrap; }
.b-tab svg { width: 16px; height: 16px; }
.b-tab button { font: 18px/16px "Liberation Sans", sans-serif; color: #888; }
.b-tab.active { background: #fff; color: #111; }
.page { flex: 1; min-height: 0; background: #fff; padding: 2px 0 0 19px; }
.cad { width: 100%; height: 100%; }

/* polygon editor window */
.dialog { position: absolute; left: 188px; top: 202px; width: 758px; display: flex; flex-direction: column; border: solid #0a3cd2; border-width: 0 4px 4px 3px; background: #ece9d8; }
.d-title { display: flex; align-items: center; justify-content: space-between; height: 21px; margin: 0 -3px; padding: 2px 4px 0 3px; background: linear-gradient(#0a48d8, #1570f8 15%, #0058e8 50%, #0466fa 85%, #0450d8); }
.d-title h1 { margin: 0; font-size: 13px; line-height: 18px; color: #fff; font-weight: 700; }
.d-title button { display: flex; align-items: center; justify-content: center; width: 14px; height: 14px; border: 1px solid #fff; border-radius: 2px; background: #d4492a; }
.d-title svg { width: 10px; height: 10px; }
.d-tools { height: 27px; gap: 6px; padding-left: 4px; }
.d-opts { height: 24px; gap: 5px; padding-left: 4px; }
.d-opts .sep { margin-right: -2px; }
.grip { flex: none; width: 3px; height: 14px; border-left: 2px dotted #b5b2a2; margin-right: -2px; }
.radios { display: flex; gap: 8px; width: 181px; line-height: 24px; background: #ece9d8; }
.radios label { display: flex; align-items: center; gap: 8px; }
.radios input { appearance: none; width: 12px; height: 12px; border: 1px solid #aca899; border-radius: 50%; background: #f5f4ee; }
.radios input:checked { border-color: #555; background: radial-gradient(circle, #111 0 2px, #f5f4ee 3px); }
.spin { display: flex; align-items: center; width: 78px; height: 19px; margin-left: 4px; padding-right: 4px; border: 1px solid #aca899; background: #f4f2ea; }
.spin input { flex: 1; min-width: 0; border: 0; padding: 0 12px 0 0; text-align: right; background: none; color: #aca899; }
.spin svg { width: 7px; height: 13px; }
.unit { margin: 0 9px 0 2px; }
.canvas { width: 100%; height: 464px; }
.small { fill: #b4b4b4; font: 12px "Liberation Mono", monospace; }
.big { fill: #18e818; font: 700 18px "Liberation Serif", serif; }
.status { height: 23px; border-bottom: 1px solid #aca899; }
.status span { display: block; width: 61px; padding-left: 6px; line-height: 20px; background: linear-gradient(90deg, #fbfaf7, #f1efe5); }
.d-foot { display: flex; justify-content: flex-end; gap: 15px; padding: 9px 13px 12px; border-top: 1px solid #fff; }
.d-foot button { width: 72px; height: 23px; padding-bottom: 2px; border: 1px solid #1c4a85; border-radius: 3px; background: linear-gradient(#fff, #eceadf); }
.d-foot .w105 { width: 105px; margin-right: 8px; }
.d-foot .w113 { width: 113px; margin-right: 10px; }

.arrows { position: absolute; left: 0; top: 0; width: 100%; height: 100%; pointer-events: none; }
```
